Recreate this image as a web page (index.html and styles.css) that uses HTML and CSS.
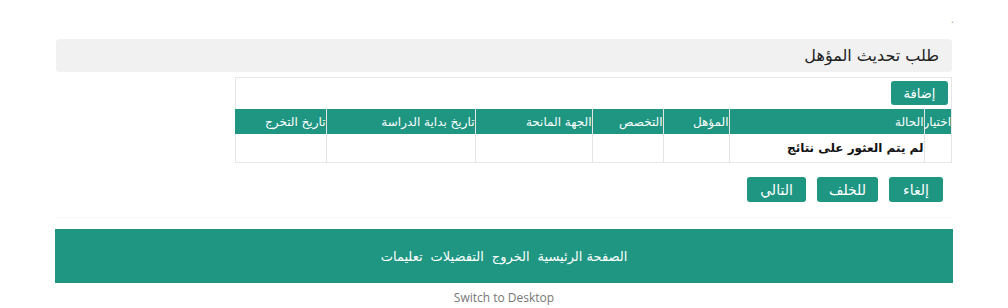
FILE: index.html
```html
<!DOCTYPE html>
<html lang="ar" dir="rtl">
<head>
    <meta charset="UTF-8">
    <meta name="viewport" content="width=device-width, initial-scale=1.0">
    <title>طلب تحديث المؤهل</title>
    <link rel="stylesheet" href="styles.css">
</head>
<body>
    <div class="page">
        <!-- small marker at the top -->
        <div class="top-dot">.</div>

        <div class="panel-title">طلب تحديث المؤهل</div>

        <div class="grid-box">
            <div class="grid-tools">
                <button class="btn">إضافة</button>
            </div>
            <table class="grid">
                <thead>
                    <tr>
                        <th class="c-select">اختيار</th>
                        <th class="c-status">الحالة</th>
                        <th class="c-qual">المؤهل</th>
                        <th class="c-major">التخصص</th>
                        <th class="c-org">الجهة المانحة</th>
                        <th class="c-start">تاريخ بداية الدراسة</th>
                        <th class="c-grad">تاريخ التخرج</th>
                    </tr>
                </thead>
                <tbody>
                    <tr>
                        <td></td>
                        <td class="empty-msg">لم يتم العثور على نتائج</td>
                        <td></td>
                        <td></td>
                        <td></td>
                        <td></td>
                        <td></td>
                    </tr>
                </tbody>
            </table>
        </div>

        <div class="actions">
            <button class="btn btn-cancel">إلغاء</button>
            <button class="btn btn-back">للخلف</button>
            <button class="btn btn-next">التالي</button>
        </div>

        <div class="separator"></div>

        <!-- footer links -->
        <div class="footer">
            <a href="#">الصفحة الرئيسية</a>
            <a href="#">الخروج</a>
            <a href="#">التفضيلات</a>
            <a href="#">تعليمات</a>
        </div>
        <div class="switch">Switch to Desktop</div>
    </div>
</body>
</html>
```

FILE: styles.css
```css
/* Basic Reset */
* {
    margin: 0;
    padding: 0;
    box-sizing: border-box;
}

body {
    font-family: "DejaVu Sans", "Noto Sans", sans-serif;
    background-color: #ffffff;
    color: #222;
    direction: rtl;
}

.page {
    width: 898px;
    margin: 0 auto;
    padding-top: 14px;
}

.top-dot {
    height: 25px;
    font-size: 10px;
    line-height: 12px;
    color: #999;
    margin-right: -1px;
}

/* Gray title bar */
.panel-title {
    margin: 0 1px;
    height: 33px;
    line-height: 33px;
    background-color: #f1f1f1;
    border-radius: 4px;
    padding-right: 13px;
    font-size: 16px;
    color: #222;
}

/* Grid box with add button */
.grid-box {
    width: 717px;
    margin: 5px 1px 0 0;
    border: 1px solid #e6e6e6;
}

.grid-tools {
    padding: 3px 3px 4px 0;
}

.btn {
    font-family: "DejaVu Sans", "Noto Sans", sans-serif;
    font-size: 13px;
    color: #ffffff;
    background-color: #1e9682;
    border: none;
    border-radius: 3px;
    height: 24px;
    padding: 0;
    cursor: pointer;
}

.grid-tools .btn {
    width: 57px;
}

.grid {
    width: 100%;
    border-collapse: collapse;
    table-layout: fixed;
}

.grid th {
    background-color: #1e9682;
    color: #ffffff;
    font-weight: normal;
    font-size: 12px;
    text-align: right;
    height: 25px;
    border-left: 1px solid #e4e4e4;
    white-space: nowrap;
    overflow: hidden;
}

.grid td {
    height: 28px;
    border-left: 1px solid #e4e4e4;
    font-size: 12px;
    font-weight: bold;
    color: #111;
    text-align: right;
}

.grid th:last-child,
.grid td:last-child {
    border-left: none;
}

.c-select { width: 27px; }
.c-status { width: 195px; }
.c-qual { width: 66px; }
.c-major { width: 71px; }
.c-org { width: 117px; }
.c-start { width: 149px; }
.c-grad { width: 91px; }

/* Bottom buttons */
.actions {
    display: flex;
    gap: 11px;
    padding: 14px 10px 0 0;
}

.actions .btn {
    height: 25px;
    font-size: 14px;
}

.btn-cancel { width: 54px; }
.btn-back { width: 61px; }
.btn-next { width: 59px; }

.separator {
    margin-top: 15px;
    border-top: 1px solid #f8f8f8;
}

/* Teal footer bar */
.footer {
    margin-top: 11px;
    height: 54px;
    background-color: #1e9682;
    display: flex;
    justify-content: center;
    align-items: center;
    gap: 8px;
}

.footer a {
    color: #ffffff;
    text-decoration: none;
    font-size: 13px;
}

.switch {
    text-align: center;
    font-family: "Open Sans", "Liberation Sans", sans-serif;
    font-size: 12px;
    color: #777;
    margin-top: 6px;
    direction: ltr;
}
```
